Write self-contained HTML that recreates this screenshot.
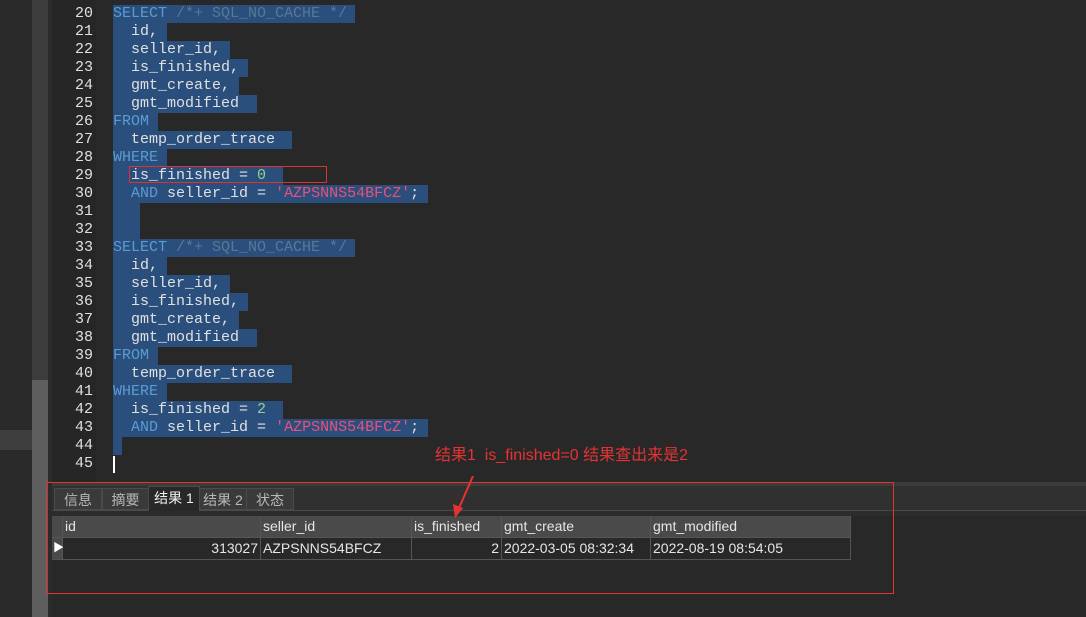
<!DOCTYPE html>
<html><head><meta charset="utf-8"><style>
body{margin:0;width:1086px;height:617px;background:#282828;position:relative;overflow:hidden;font-family:"Liberation Sans","Noto Sans CJK SC",sans-serif}
.a{position:absolute}
.code{font-family:"Liberation Mono",monospace;font-size:15px;line-height:18px;color:#e0e0e0}
.pre{white-space:pre;top:0}
.ln{left:52px;width:41px;text-align:right;color:#e0e0e0}
.hl{background:#2a4f7c;height:18px}
.k{color:#5b9bd5}.c{color:#5a7896}.n{color:#8fd18f}.s{color:#ec4f7a}
.tab{top:488px;height:22px;background:#3a3a3a;border:1px solid #4a4a4a;color:#b8b8b8;font-size:14px;line-height:22px;text-align:center;box-sizing:border-box}
.cell{height:22px;line-height:21px;font-size:14px;color:#e6e6e6;box-sizing:border-box;border-right:1px solid #555;border-bottom:1px solid #555;padding:0 2px;white-space:nowrap}
.h{background:#4a4a4a;top:516px}
.r{background:#282828;top:538px;text-align:right}
</style></head><body>
<div class="a" style="left:0;top:0;width:32px;height:617px;background:#2a2a2a"></div>
<div class="a" style="left:0;top:430px;width:32px;height:20px;background:#3e3e3e"></div>
<div class="a" style="left:32px;top:0;width:16px;height:617px;background:#3c3c3c"></div>
<div class="a" style="left:32px;top:380px;width:16px;height:237px;background:#5e5e5e"></div>
<div class="a" style="left:48px;top:0;width:4px;height:617px;background:#2b2b2b"></div>
<div class="a" style="left:52px;top:0;width:44px;height:482px;background:#262626"></div>

<div class="a code" style="left:0;top:5px;width:1086px;height:470px">
<div class="a hl" style="left:113px;top:0;width:242px"></div>
<div class="a hl" style="left:113px;top:18px;width:54px"></div>
<div class="a hl" style="left:113px;top:36px;width:117px"></div>
<div class="a hl" style="left:113px;top:54px;width:135px"></div>
<div class="a hl" style="left:113px;top:72px;width:126px"></div>
<div class="a hl" style="left:113px;top:90px;width:144px"></div>
<div class="a hl" style="left:113px;top:108px;width:45px"></div>
<div class="a hl" style="left:113px;top:126px;width:179px"></div>
<div class="a hl" style="left:113px;top:144px;width:54px"></div>
<div class="a hl" style="left:113px;top:162px;width:170px"></div>
<div class="a hl" style="left:113px;top:180px;width:315px"></div>
<div class="a hl" style="left:113px;top:198px;width:27px"></div>
<div class="a hl" style="left:113px;top:216px;width:27px"></div>
<div class="a hl" style="left:113px;top:234px;width:242px"></div>
<div class="a hl" style="left:113px;top:252px;width:54px"></div>
<div class="a hl" style="left:113px;top:270px;width:117px"></div>
<div class="a hl" style="left:113px;top:288px;width:135px"></div>
<div class="a hl" style="left:113px;top:306px;width:126px"></div>
<div class="a hl" style="left:113px;top:324px;width:144px"></div>
<div class="a hl" style="left:113px;top:342px;width:45px"></div>
<div class="a hl" style="left:113px;top:360px;width:179px"></div>
<div class="a hl" style="left:113px;top:378px;width:54px"></div>
<div class="a hl" style="left:113px;top:396px;width:170px"></div>
<div class="a hl" style="left:113px;top:414px;width:315px"></div>
<div class="a hl" style="left:113px;top:432px;width:9px"></div>
<div class="a" style="left:113px;top:451px;width:2px;height:17px;background:#fff"></div>
<div class="a ln pre">20
21
22
23
24
25
26
27
28
29
30
31
32
33
34
35
36
37
38
39
40
41
42
43
44
45</div>
<div class="a pre" style="left:113px"><span class="k">SELECT</span> <span class="c">/*+ SQL_NO_CACHE */</span>
  id,
  seller_id,
  is_finished,
  gmt_create,
  gmt_modified
<span class="k">FROM</span>
  temp_order_trace
<span class="k">WHERE</span>
  is_finished = <span class="n">0</span>
  <span class="k">AND</span> seller_id = <span class="s">'AZPSNNS54BFCZ'</span>;


<span class="k">SELECT</span> <span class="c">/*+ SQL_NO_CACHE */</span>
  id,
  seller_id,
  is_finished,
  gmt_create,
  gmt_modified
<span class="k">FROM</span>
  temp_order_trace
<span class="k">WHERE</span>
  is_finished = <span class="n">2</span>
  <span class="k">AND</span> seller_id = <span class="s">'AZPSNNS54BFCZ'</span>;</div>
</div>
<div class="a" style="left:129px;top:166px;width:198px;height:17px;border:1px solid #e03030;box-sizing:border-box"></div>

<div class="a" style="left:52px;top:482px;width:1034px;height:4px;background:#3c3c3c"></div>
<div class="a" style="left:52px;top:486px;width:1034px;height:24px;background:#303030"></div>
<div class="a" style="left:52px;top:510px;width:1034px;height:1px;background:#4a4a4a"></div>
<div class="a" style="left:52px;top:511px;width:1034px;height:5px;background:#2c2c2c"></div>
<div class="a tab" style="left:54px;width:48px">信息</div>
<div class="a tab" style="left:102px;width:47px">摘要</div>
<div class="a tab" style="left:148px;width:52px;top:486px;height:25px;background:#282828;color:#f0f0f0;border-bottom:none">结果 1</div>
<div class="a tab" style="left:199px;width:48px">结果 2</div>
<div class="a tab" style="left:246px;width:48px">状态</div>

<div class="a cell h" style="left:52px;width:11px"></div>
<div class="a cell h" style="left:63px;width:198px">id</div>
<div class="a cell h" style="left:261px;width:151px">seller_id</div>
<div class="a cell h" style="left:412px;width:90px">is_finished</div>
<div class="a cell h" style="left:502px;width:149px">gmt_create</div>
<div class="a cell h" style="left:651px;width:200px">gmt_modified</div>
<div class="a cell" style="left:52px;top:538px;width:11px;background:#4a4a4a;color:#fff;font-size:11px;padding:0 1px">▶</div>
<div class="a cell r" style="left:63px;width:198px">313027</div>
<div class="a cell r" style="left:261px;width:151px;text-align:left">AZPSNNS54BFCZ</div>
<div class="a cell r" style="left:412px;width:90px">2</div>
<div class="a cell r" style="left:502px;width:149px;text-align:left">2022-03-05 08:32:34</div>
<div class="a cell r" style="left:651px;width:200px;text-align:left">2022-08-19 08:54:05</div>

<div class="a" style="left:46px;top:482px;width:848px;height:112px;border:1px solid #e53333;box-sizing:border-box"></div>
<div class="a" style="left:435px;top:446px;color:#e53333;font-size:16px;line-height:20px;white-space:nowrap">结果1&nbsp; is_finished=0 结果查出来是2</div>
<svg class="a" style="left:0;top:0" width="1086" height="617"><line x1="473" y1="476" x2="459" y2="508" stroke="#e53333" stroke-width="2"/><polygon points="455,518 453,504 463,508" fill="#e53333"/></svg>
</body></html>
